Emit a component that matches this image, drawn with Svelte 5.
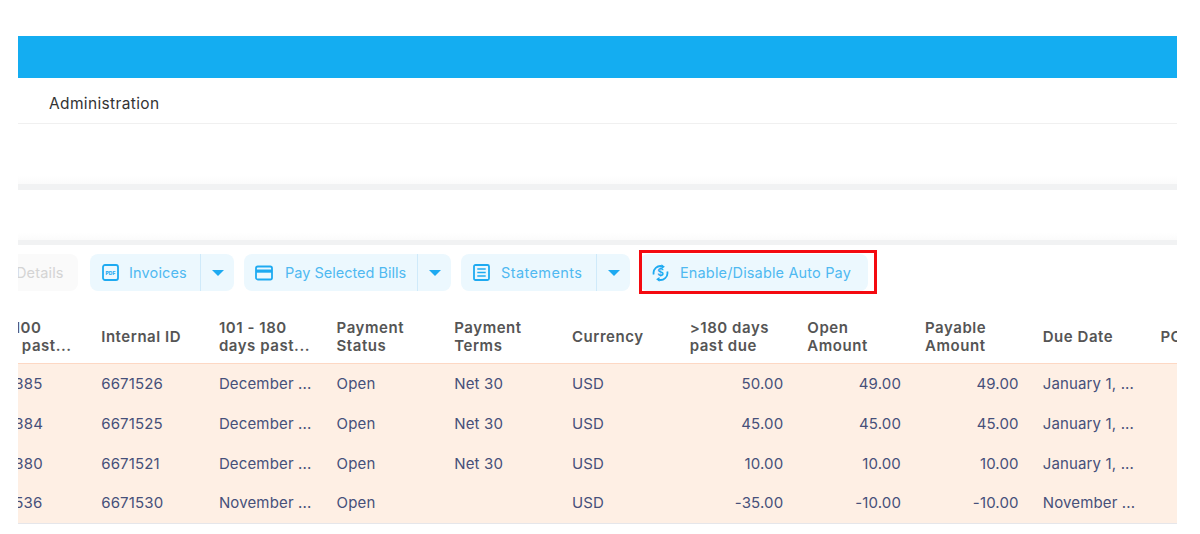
<script>
  const columns = [
    { lines: ['91 - 100', 'days past...'] },
    { lines: ['Internal ID'] },
    { lines: ['101 - 180', 'days past...'] },
    { lines: ['Payment', 'Status'] },
    { lines: ['Payment', 'Terms'] },
    { lines: ['Currency'] },
    { lines: ['>180 days', 'past due'] },
    { lines: ['Open', 'Amount'] },
    { lines: ['Payable', 'Amount'] },
    { lines: ['Due Date'] },
    { lines: ['PO'] }
  ];

  const rows = [
    ['6671385', '6671526', 'December ...', 'Open', 'Net 30', 'USD', '50.00', '49.00', '49.00', 'January 1, ...', ''],
    ['6671384', '6671525', 'December ...', 'Open', 'Net 30', 'USD', '45.00', '45.00', '45.00', 'January 1, ...', ''],
    ['6671380', '6671521', 'December ...', 'Open', 'Net 30', 'USD', '10.00', '10.00', '10.00', 'January 1, ...', ''],
    ['6671536', '6671530', 'November ...', 'Open', '', 'USD', '-35.00', '-10.00', '-10.00', 'November ...', '']
  ];

  const numeric = [6, 7, 8];
</script>

<div class="page">
  <div class="topbar"></div>
  <nav class="nav"><span>Administration</span></nav>
  <div class="panel first"></div>
  <div class="panel second"></div>

  <div class="toolbar">
    <button class="btn ghost">Details</button>

    <div class="btn split">
      <span class="main invoices">
        <svg class="ico" viewBox="0 0 17 17" width="17" height="17">
          <rect x="1" y="1" width="15" height="15" rx="2" fill="none" stroke="currentColor" stroke-width="1.8" />
          <text x="8.500" y="10.600" text-anchor="middle" class="pdf">PDF</text>
        </svg>
        <span>Invoices</span>
      </span>
      <span class="caret-box"><i class="caret"></i></span>
    </div>

    <div class="btn split">
      <span class="main pay">
        <svg class="ico" viewBox="0 0 18 16" width="18" height="16">
          <rect x="1" y="1.500" width="16" height="13" rx="1.800" fill="none" stroke="currentColor" stroke-width="1.800" />
          <rect x="1" y="4.500" width="16" height="3.200" fill="currentColor" />
        </svg>
        <span>Pay Selected Bills</span>
      </span>
      <span class="caret-box"><i class="caret"></i></span>
    </div>

    <div class="btn split">
      <span class="main statements">
        <svg class="ico" viewBox="0 0 17 17" width="17" height="17">
          <rect x="1" y="1" width="15" height="15" rx="1.500" fill="none" stroke="currentColor" stroke-width="1.800" />
          <path d="M4.300 5h8.400M4.300 8.500h8.400M4.300 12h8.400" fill="none" stroke="currentColor" stroke-width="1.500" />
        </svg>
        <span>Statements</span>
      </span>
      <span class="caret-box"><i class="caret"></i></span>
    </div>

    <div class="btn autopay">
      <span class="main enable">
        <svg class="ico" viewBox="0 0 17 18" width="17" height="18">
          <path d="M1.700 10.500A7 7 0 0 1 10.500 2.300" fill="none" stroke="currentColor" stroke-width="1.800" />
          <path d="M15.300 7.500A7 7 0 0 1 6.500 15.700" fill="none" stroke="currentColor" stroke-width="1.800" />
          <path d="M9.500.2l3.400 2.500L9.500 5zM7.500 13l-3.400 2.300L7.500 17.800z" fill="currentColor" />
          <text x="8.500" y="12.200" text-anchor="middle" class="dollar">$</text>
        </svg>
        <span>Enable/Disable Auto Pay</span>
      </span>
    </div>
    <div class="highlight"></div>
  </div>

  <div class="table-wrap">
    <table>
      <thead>
        <tr>
          {#each columns as col}
            <th>
              {#each col.lines as line}
                <div>{line}</div>
              {/each}
            </th>
          {/each}
        </tr>
      </thead>
      <tbody>
        {#each rows as row}
          <tr>
            {#each row as cell, i}
              <td class:num={numeric.includes(i)}>{cell}</td>
            {/each}
          </tr>
        {/each}
      </tbody>
    </table>
  </div>
</div>

<style>
  :global(body) {
    margin: 0;
    background: #fff;
  }

  .page {
    width: 1159px;
    height: 534px;
    margin-left: 18px;
    padding-top: 36px;
    box-sizing: border-box;
    overflow: hidden;
    font-family: Inter, "Open Sans", sans-serif;
  }

  .topbar {
    height: 42px;
    background: #14adf1;
  }

  .nav {
    height: 46px;
    box-sizing: border-box;
    display: flex;
    align-items: center;
    padding: 6px 0 0 31px;
    border-bottom: 1px solid #f0f0f0;
    font-size: 15.500px;
    letter-spacing: 0.35px;
    color: #333;
  }

  .panel {
    background: linear-gradient(#fff 85%, #fbfbfb);
  }

  .panel.first {
    height: 60px;
    border-bottom: 6px solid #f1f2f3;
  }

  .panel.second {
    height: 50px;
    border-bottom: 5px solid #f1f2f3;
  }

  .toolbar {
    position: relative;
    display: flex;
    gap: 10px;
    padding-top: 9px;
    height: 37px;
  }

  .btn {
    display: flex;
    flex: none;
    align-items: stretch;
    height: 37px;
    box-sizing: border-box;
    border: none;
    border-radius: 8px;
    background: #ecf8fe;
    color: #4fb9f1;
    font-family: inherit;
    font-size: 14.500px;
    letter-spacing: 0.15px;
    padding: 0;
  }

  .ghost {
    width: 100px;
    margin: 0 2px 0 -40px;
    background: #fafafa;
    color: #d4d4d4;
    align-items: center;
    padding-left: 38px;
  }

  .main {
    display: flex;
    align-items: center;
    gap: 11px;
    padding-left: 12px;
    box-sizing: border-box;
  }

  .ico {
    color: #1eaaf1;
    flex: none;
  }

  .pdf {
    font-size: 5px;
    font-weight: 800;
    fill: currentColor;
    letter-spacing: 0;
  }

  .dollar {
    font-size: 10px;
    font-weight: 700;
    fill: currentColor;
    letter-spacing: 0;
  }

  .invoices { width: 111px; gap: 10px; }
  .pay { width: 174px; padding-left: 11px; gap: 12px; letter-spacing: 0; }
  .statements { width: 136px; letter-spacing: 0.4px; }
  .enable { width: 228px; }

  .split .main {
    border-right: 1px solid #cfeafa;
  }

  .caret-box {
    width: 33px;
    display: flex;
    align-items: center;
    justify-content: center;
  }

  .caret {
    width: 0;
    height: 0;
    border-left: 6px solid transparent;
    border-right: 6px solid transparent;
    border-top: 6px solid #1eaaf1;
  }

  .highlight {
    position: absolute;
    left: 621px;
    top: 5px;
    width: 238px;
    height: 44px;
    box-sizing: border-box;
    border: 3px solid #f40a10;
  }

  .table-wrap {
    margin-top: 19px;
    overflow: hidden;
  }

  table {
    border-collapse: collapse;
    table-layout: fixed;
    width: 1294.700px;
    margin-left: -46.500px;
  }

  th {
    height: 53px;
    padding: 0 12px;
    text-align: left;
    vertical-align: middle;
    font-size: 15px;
    letter-spacing: 0.55px;
    line-height: 18px;
    font-weight: 600;
    color: #555;
    white-space: nowrap;
    border-bottom: 1px solid #fdd8c4;
    overflow: hidden;
  }

  td {
    height: 40px;
    box-sizing: border-box;
    padding: 0 12px 1px;
    background: #feefe4;
    font-size: 15px;
    letter-spacing: 0.15px;
    color: #46507a;
    white-space: nowrap;
    overflow: hidden;
  }

  th:first-child,
  td:first-child {
    padding-left: 9px;
  }

  td.num {
    text-align: right;
  }

  tbody tr:last-child td {
    border-bottom: 1px solid #e6e6ea;
  }
</style>
